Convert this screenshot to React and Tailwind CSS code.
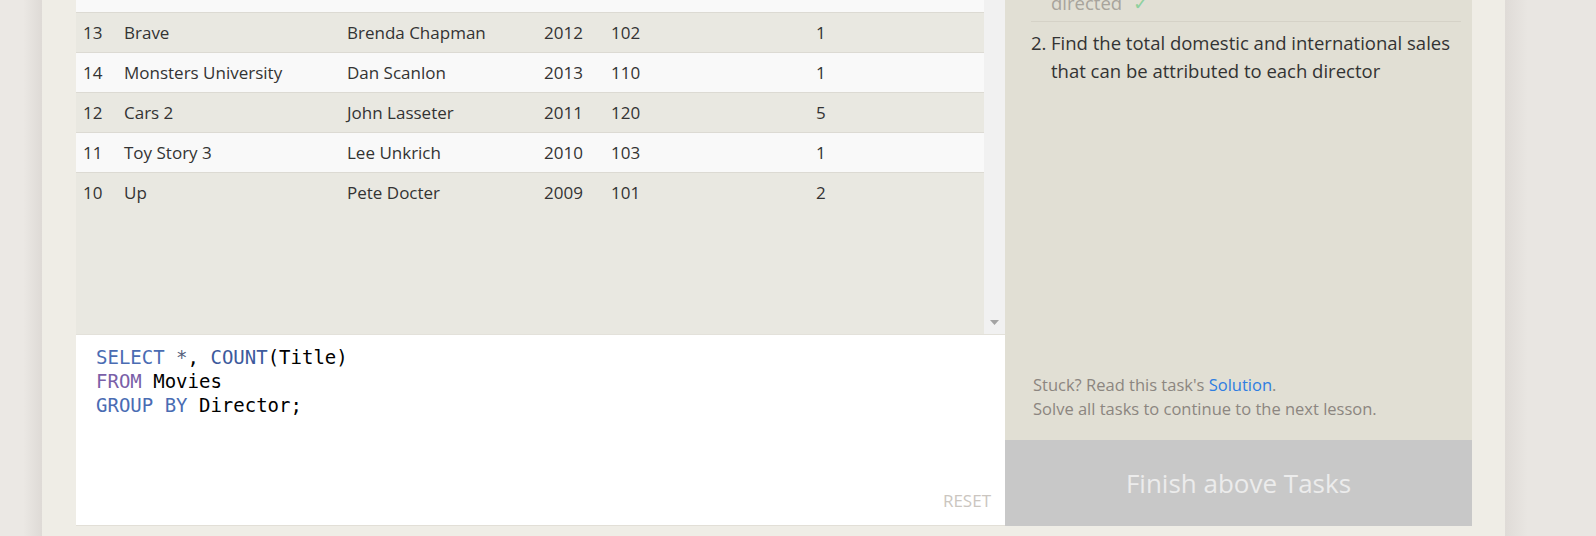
import React from 'react';

const rows = [
  { id: 13, title: 'Brave', director: 'Brenda Chapman', year: 2012, length: 102, count: 1 },
  { id: 14, title: 'Monsters University', director: 'Dan Scanlon', year: 2013, length: 110, count: 1 },
  { id: 12, title: 'Cars 2', director: 'John Lasseter', year: 2011, length: 120, count: 5 },
  { id: 11, title: 'Toy Story 3', director: 'Lee Unkrich', year: 2010, length: 103, count: 1 },
  { id: 10, title: 'Up', director: 'Pete Docter', year: 2009, length: 101, count: 2 },
];

const sans = { fontFamily: '"Open Sans", "Noto Sans", sans-serif' };

const ResultTable = () => (
  <div className="flex h-[334px]">
    <div className="w-[908px] bg-[#e9e8e1] overflow-hidden">
      {/* row above, scrolled out of view */}
      <div className="h-[12px] bg-[#f9f9f9]" />
      {rows.map((r, i) => (
        <div
          key={r.id}
          className={`grid grid-cols-[41px_223px_197px_67px_205px_1fr] items-center h-[40px] pl-[7px] border-t border-[#dcdad3] text-[17px] text-[#333333] ${
            i % 2 === 0 ? 'bg-[#e9e8e1]' : 'bg-[#f9f9f9]'
          }`}
        >
          <span>{r.id}</span>
          <span>{r.title}</span>
          <span>{r.director}</span>
          <span>{r.year}</span>
          <span>{r.length}</span>
          <span>{r.count}</span>
        </div>
      ))}
    </div>
    {/* scrollbar */}
    <div className="w-[21px] bg-[#f1f1f1] flex flex-col justify-end items-center pb-[9px]">
      <svg width="9" height="5" viewBox="0 0 9 5">
        <path d="M0 0 H9 L4.5 5 Z" fill="#a3a3a3" />
      </svg>
    </div>
  </div>
);

const Editor = () => (
  <div className="relative h-[192px] bg-white border-t border-[#e3e1da] border-b border-b-[#e2dfd7]">
    <pre
      className="pt-[10px] pl-[20px] text-[19px] leading-[24px] text-black"
      style={{ fontFamily: '"DejaVu Sans Mono", "Liberation Mono", monospace' }}
    >
      <span className="text-[#4a6cb3]">SELECT</span> <span className="text-[#55607a]">*</span>, <span className="text-[#3d5a9c]">COUNT</span>(Title)
      {'\n'}
      <span className="text-[#7a5fa8]">FROM</span> Movies
      {'\n'}
      <span className="text-[#4a6cb3]">GROUP BY</span> Director;
    </pre>
    <span className="absolute right-[14px] bottom-[12px] text-[17px] text-[#cbc6c0]">RESET</span>
  </div>
);

const TaskPanel = () => (
  <div className="w-[467px] shrink-0 flex flex-col">
    <div className="flex-1 bg-[#e1dfd4] flex flex-col justify-between overflow-hidden">
      <div className="pl-[26px] pr-[11px] text-[18.5px] leading-[28px]">
        <div className="pl-[20px] -mt-[11px] pb-[4px] border-b border-[#d5d2c7] text-[#a8a49c]">
          directed <span className="ml-[6px] text-[#8fd19e]">✓</span>
        </div>
        <div className="flex pt-[7px] text-[#333333]">
          <span className="w-[20px] shrink-0">2.</span>
          <span>
            Find the total domestic and international sales
            <br />
            that can be attributed to each director
          </span>
        </div>
      </div>
      <div className="pl-[28px] pb-[19px] text-[16.5px] leading-[24px] text-[#8c8680]">
        <p>
          Stuck? Read this task's <span className="text-[#2f7de1]">Solution</span>.
        </p>
        <p>Solve all tasks to continue to the next lesson.</p>
      </div>
    </div>
    <div className="h-[86px] shrink-0 bg-[#c8c8c8] flex items-center justify-center text-[26px] text-[#ececec]">
      Finish above Tasks
    </div>
  </div>
);

export default function App() {
  return (
    <div className="flex h-[536px] w-full overflow-hidden bg-[#e9e6e2]" style={sans}>
      <div className="w-[42px] shrink-0 bg-[linear-gradient(to_right,#ebe8e4_55%,#dedad6)]" />
      <div className="w-[1463px] shrink-0 bg-[#efede6] pl-[34px] pr-[33px] pb-[10px] flex items-stretch">
        <div className="w-[929px] shrink-0 flex flex-col">
          <ResultTable />
          <Editor />
        </div>
        <TaskPanel />
      </div>
      <div className="flex-1 bg-[linear-gradient(to_right,#dfdbd7,#e9e6e2_25%)]" />
    </div>
  );
}
